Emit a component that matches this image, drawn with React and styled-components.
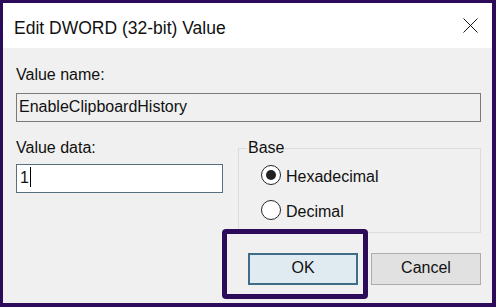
import React from 'react';
import styled, { createGlobalStyle } from 'styled-components';

const GlobalStyle = createGlobalStyle`
  body {
    margin: 0;
    font-family: 'Liberation Sans', Arial, sans-serif;
    color: #111;
  }
`;

const Frame = styled.div`
  width: 496px;
  height: 307px;
  box-sizing: border-box;
  border: solid #2c0b5a;
  border-width: 3px 4px 4px 3px;
  background: #f0f0f0;
  display: flex;
  flex-direction: column;
`;

const TitleBar = styled.div`
  height: 45px;
  flex-shrink: 0;
  background: #fff;
  display: flex;
  align-items: center;
  justify-content: space-between;
  padding: 0 14px 0 11px;
`;

const Title = styled.div`
  margin-top: 6px;
  font-size: 17.5px;
  color: #111;
`;

const CloseButton = styled.div`
  width: 15px;
  height: 15px;
  display: flex;
  svg {
    display: block;
  }
`;

const Body = styled.div`
  flex: 1;
  padding: 18px 11px 0 13px;
  display: flex;
  flex-direction: column;
`;

const FieldLabel = styled.div`
  font-size: 16px;
  line-height: 18px;
`;

const TextField = styled.div`
  box-sizing: border-box;
  height: 29px;
  margin-top: ${({ gap }) => gap}px;
  border: 1px solid ${({ focused }) => (focused ? '#56707e' : '#7a7a7a')};
  background: ${({ focused }) => (focused ? '#fff' : '#f0f0f0')};
  padding: 0 ${({ focused }) => (focused ? 3 : 2)}px 2px;
  font-size: 16px;
  line-height: 25px;
  white-space: nowrap;
`;

const Caret = styled.span`
  display: inline-block;
  width: 1px;
  height: 20px;
  margin-left: 1px;
  background: #000;
  vertical-align: -4px;
`;

const DataRow = styled.div`
  display: grid;
  grid-template-columns: 207px 1fr;
  column-gap: 15px;
  margin-top: 17px;
`;

const GroupBox = styled.fieldset`
  margin: 0;
  min-width: 0;
  border: 1px solid #dcdcdc;
  padding: 2px 0 3px 8px;
`;

const Legend = styled.legend`
  padding: 0 1px;
  font-size: 16px;
  line-height: 18px;
`;

const RadioList = styled.div`
  margin-left: 14px;
`;

const RadioRow = styled.div`
  height: 35px;
  display: flex;
  align-items: center;
  gap: 5px;
  font-size: 16px;
  line-height: 18px;
`;

const RadioCircle = styled.span`
  box-sizing: border-box;
  width: 20px;
  height: 20px;
  margin-bottom: 3px;
  border-radius: 50%;
  border: 1.5px solid #262626;
  background: #fff;
  display: flex;
  align-items: center;
  justify-content: center;

  &::after {
    content: '';
    width: 10px;
    height: 10px;
    border-radius: 50%;
    background: #222;
    display: ${({ checked }) => (checked ? 'block' : 'none')};
  }
`;

const ButtonRow = styled.div`
  display: flex;
  justify-content: flex-end;
  gap: 13px;
  margin-top: 20px;
`;

const Highlight = styled.div`
  position: relative;

  &::after {
    content: '';
    position: absolute;
    top: -24px;
    left: -26px;
    right: -10px;
    bottom: -14px;
    border: 5px solid #2c0b5a;
    border-radius: 4px;
    pointer-events: none;
  }
`;

const Button = styled.div`
  box-sizing: border-box;
  width: 110px;
  height: 32px;
  padding-bottom: 2px;
  display: flex;
  align-items: center;
  justify-content: center;
  font-size: 16px;
  color: #111;
  background: ${({ primary }) => (primary ? '#e0ebf1' : '#e1e1e1')};
  border: ${({ primary }) => (primary ? '2px solid #3f6d89' : '1px solid #adadad')};
`;

const Radio = ({ checked, label }) => (
  <RadioRow>
    <RadioCircle checked={checked} />
    {label}
  </RadioRow>
);

export default function App() {
  return (
    <>
      <GlobalStyle />
      <Frame>
        <TitleBar>
          <Title>Edit DWORD (32-bit) Value</Title>
          <CloseButton>
            <svg width="15" height="15" viewBox="0 0 15 15">
              <path d="M0.5 0.5 L14.5 14.5 M14.5 0.5 L0.5 14.5" stroke="#1a1a1a" strokeWidth="1" fill="none" />
            </svg>
          </CloseButton>
        </TitleBar>
        <Body>
          <FieldLabel>Value name:</FieldLabel>
          <TextField gap={9}>EnableClipboardHistory</TextField>
          <DataRow>
            <div>
              <FieldLabel>Value data:</FieldLabel>
              <TextField gap={7} focused>
                1<Caret />
              </TextField>
            </div>
            <GroupBox>
              <Legend>Base</Legend>
              <RadioList>
                <Radio checked label="Hexadecimal" />
                <Radio label="Decimal" />
              </RadioList>
            </GroupBox>
          </DataRow>
          <ButtonRow>
            <Highlight>
              <Button primary>OK</Button>
            </Highlight>
            <Button>Cancel</Button>
          </ButtonRow>
        </Body>
      </Frame>
    </>
  );
}
